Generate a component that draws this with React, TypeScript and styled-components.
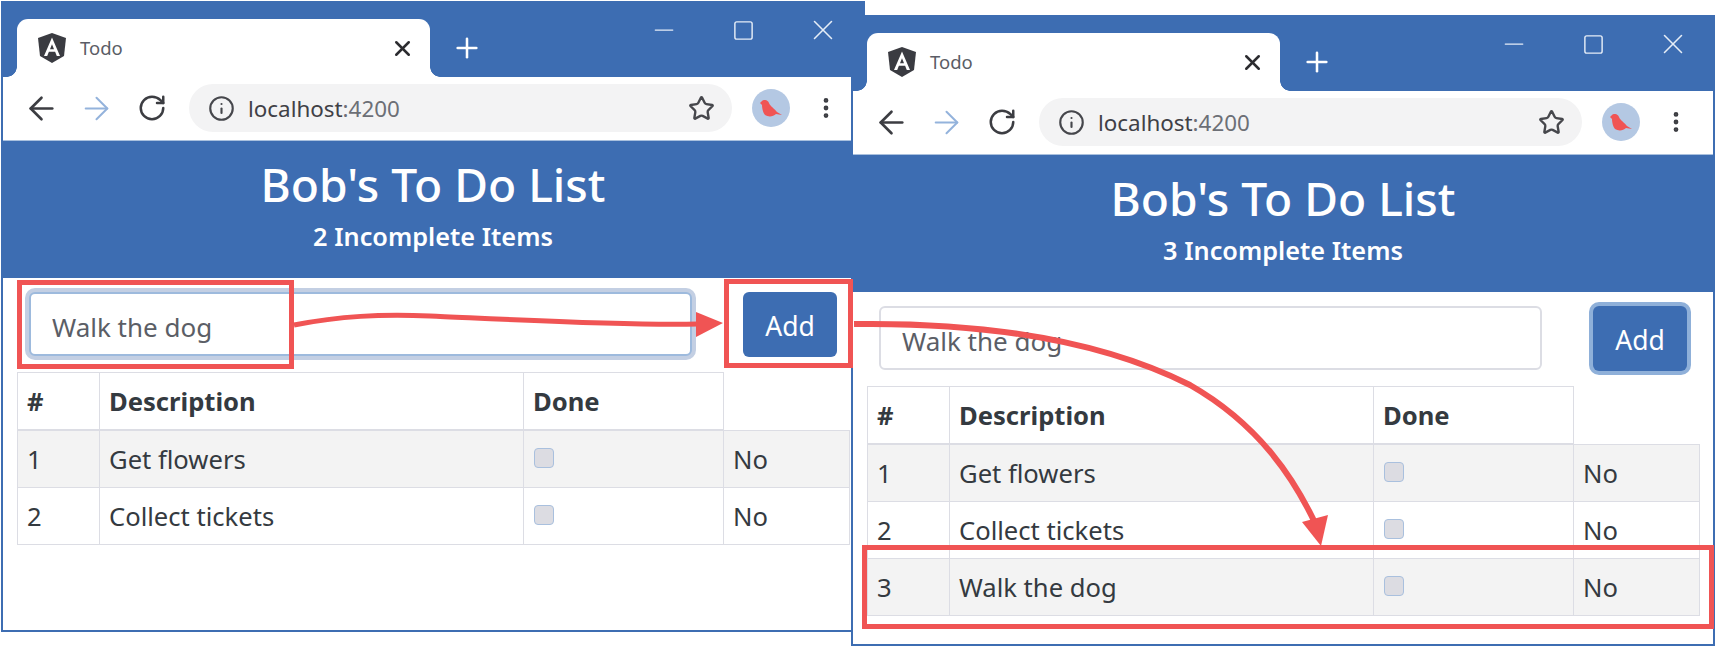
import React from 'react';
import styled, { createGlobalStyle } from 'styled-components';
import { ArrowLeft, ArrowRight, EllipsisVertical, Info, Minus, Plus, RotateCw, Square, Star, X } from 'lucide-react';

const BLUE = '#3d6db2';
const RED = '#f05454';
const LINE = '#dcdde4';

const GlobalStyle = createGlobalStyle`
  html, body {
    margin: 0;
    background: #fff;
  }
  * {
    box-sizing: border-box;
  }
`;

const Stage = styled.div`
  position: relative;
  width: 1716px;
  height: 648px;
  overflow: hidden;
  font-family: "Noto Sans", "Open Sans", sans-serif;
  color: #343a40;
`;

const BrowserWindow = styled.div<{ $x: number; $y: number }>`
  position: absolute;
  left: ${(p) => p.$x}px;
  top: ${(p) => p.$y}px;
  width: 864px;
  height: 631px;
  display: flex;
  flex-direction: column;
  background: #fff;
  border: 2px solid ${BLUE};
`;

const TabStrip = styled.div`
  display: flex;
  align-items: flex-start;
  height: 74px;
  padding: 16px 0 0 14px;
  background: ${BLUE};
`;

const Tab = styled.div`
  position: relative;
  display: flex;
  align-items: center;
  width: 413px;
  height: 58px;
  padding: 0 15px 0 21px;
  background: #fff;
  border-radius: 11px 11px 0 0;
  &::before,
  &::after {
    content: "";
    position: absolute;
    bottom: 0;
    width: 10px;
    height: 10px;
  }
  &::before {
    left: -10px;
    background: radial-gradient(circle at 0 0, transparent 9.5px, #fff 10px);
  }
  &::after {
    right: -10px;
    background: radial-gradient(circle at 100% 0, transparent 9.5px, #fff 10px);
  }
`;

const TabTitle = styled.span`
  margin-left: 14px;
  padding-bottom: 2px;
  font-size: 18.5px;
  color: #5a5d66;
`;

const TabClose = styled.span`
  display: flex;
  margin-left: auto;
  color: #2c2c30;
`;

const NewTab = styled.span`
  display: flex;
  justify-content: center;
  width: 32px;
  height: 58px;
  margin-left: 21px;
  align-items: center;
  color: #fff;
`;

const WindowControls = styled.div`
  display: flex;
  margin-left: auto;
  margin-top: 1px;
  color: #e6edf7;
`;

const ControlSlot = styled.span`
  display: flex;
  align-items: center;
  justify-content: center;
  width: 79.5px;
  height: 20px;
`;

const Toolbar = styled.div`
  display: flex;
  align-items: center;
  height: 64px;
  padding: 0 0 1px 11px;
  background: #fff;
  border-bottom: 1px solid #a9c0de;
`;

const NavSlot = styled.span<{ $muted?: boolean }>`
  display: flex;
  justify-content: center;
  width: 55px;
  color: ${(p) => (p.$muted ? '#94b3dc' : '#3c3d42')};
`;

const Omnibox = styled.div`
  display: flex;
  align-items: center;
  width: 543px;
  height: 48px;
  margin-left: 10px;
  padding: 0 17px 0 19px;
  background: #f3f3f4;
  border-radius: 24px;
  color: #46474c;
`;

const Address = styled.span`
  margin-left: 13px;
  font-size: 22.4px;
  color: #3f4046;
  & > span {
    color: #6c6f76;
  }
`;

const BookmarkStar = styled.span`
  display: flex;
  margin-left: auto;
`;

const Avatar = styled.span`
  display: flex;
  align-items: center;
  justify-content: center;
  width: 38px;
  height: 38px;
  margin-left: 20px;
  background: #b4c8e3;
  border-radius: 50%;
`;

const MenuDots = styled.span`
  display: flex;
  justify-content: center;
  width: 26px;
  margin-left: 23px;
  color: #3c3d42;
`;

const Banner = styled.header`
  display: flex;
  flex-direction: column;
  align-items: center;
  height: 137px;
  padding-top: 13px;
  background: ${BLUE};
  color: #fff;
`;

const BannerTitle = styled.h2`
  margin: 0;
  font-size: 46.2px;
  font-weight: 500;
  line-height: 61px;
`;

const BannerSub = styled.h5`
  margin: 4px 0 0;
  font-size: 25.3px;
  font-weight: 600;
  line-height: 34px;
`;

const FormRow = styled.div`
  display: flex;
  align-items: flex-start;
  height: 94px;
  padding: 14px 26px 0 26px;
`;

const TaskInput = styled.input<{ $focus?: boolean }>`
  width: 663px;
  height: 64px;
  padding: 5px 21px 0;
  font: 26px "Noto Sans", "Open Sans", sans-serif;
  color: #5b5e66;
  background: #fff;
  border: 2px solid ${(p) => (p.$focus ? '#9dbadd' : LINE)};
  border-radius: 6px;
  outline: none;
  box-shadow: ${(p) => (p.$focus ? '0 0 0 4px #c3cfe3' : 'none')};
`;

const AddButton = styled.button<{ $focus?: boolean }>`
  width: 94px;
  height: 65px;
  margin-left: 51px;
  padding: 2px 0 0;
  font: 26.5px "Noto Sans", "Open Sans", sans-serif;
  color: #fff;
  background: ${BLUE};
  border: none;
  border-radius: 6px;
  box-shadow: ${(p) => (p.$focus ? '0 0 0 4px #8fb0d9' : 'none')};
`;

const TableWrap = styled.div`
  padding-left: 14px;
`;

const Table = styled.table`
  width: 832px;
  table-layout: fixed;
  border-collapse: collapse;
  font-size: 25.6px;
  line-height: 36px;
  th, td {
    height: 57px;
    padding: 11px 9px 9px;
    text-align: left;
    vertical-align: top;
    border: 1px solid ${LINE};
  }
  th {
    font-weight: 700;
    border-bottom-width: 2px;
  }
  tbody tr:nth-child(odd) {
    background: #f3f3f3;
  }
`;

const Check = styled.input`
  appearance: none;
  display: block;
  width: 20px;
  height: 20px;
  margin: 6px 0 0 1px;
  background: #dcdce2;
  border: 1.5px solid #a9c0de;
  border-radius: 4px;
`;

const Highlight = styled.div<{ $x: number; $y: number; $w: number; $h: number }>`
  position: absolute;
  left: ${(p) => p.$x}px;
  top: ${(p) => p.$y}px;
  width: ${(p) => p.$w}px;
  height: ${(p) => p.$h}px;
  border: 5px solid ${RED};
`;

const ArrowLayer = styled.svg`
  position: absolute;
  left: 0;
  top: 0;
`;

const AngularMark = () => (
  <svg width="28" height="30" viewBox="0 0 28 30">
    <path d="M14 0 28 5 26 23 14 30 2 23 0 5Z" fill="#3a3b41" />
    <path d="M14 4.5 6 23h3.2l1.7-4.2h6.2l1.7 4.200H22L14 4.500Zm-2 11.700L14 11.200l2 5Z" fill="#fff" />
  </svg>
);

const Bird = () => (
  <svg width="22" height="17" viewBox="0 0 22 17">
    <path d="M0 3 2 1C4-1 8 0 9 3 10 6 15 9 17 12L22 15 16 14C13 17 8 17 5 15 3 13 2 8 2 5Z" fill={RED} />
  </svg>
);

interface TodoWindowProps {
  x: number;
  y: number;
  items: string[];
  incomplete: number;
  focus: 'input' | 'button';
}

const TodoWindow: React.FC<TodoWindowProps> = ({ x, y, items, incomplete, focus }) => (
  <BrowserWindow $x={x} $y={y}>
    <TabStrip>
      <Tab>
        <AngularMark />
        <TabTitle>Todo</TabTitle>
        <TabClose><X size={25} strokeWidth={2.4} /></TabClose>
      </Tab>
      <NewTab><Plus size={34} strokeWidth={1.9} /></NewTab>
      <WindowControls>
        <ControlSlot><Minus size={30} strokeWidth={1} /></ControlSlot>
        <ControlSlot><Square size={23} strokeWidth={1.5} /></ControlSlot>
        <ControlSlot><X size={34} strokeWidth={1.1} /></ControlSlot>
      </WindowControls>
    </TabStrip>
    <Toolbar>
      <NavSlot><ArrowLeft size={37} strokeWidth={1.7} /></NavSlot>
      <NavSlot $muted><ArrowRight size={37} strokeWidth={1.3} /></NavSlot>
      <NavSlot><RotateCw size={30} strokeWidth={2} /></NavSlot>
      <Omnibox>
        <Info size={27} strokeWidth={1.9} />
        <Address>localhost<span>:4200</span></Address>
        <BookmarkStar><Star size={27} strokeWidth={2.1} /></BookmarkStar>
      </Omnibox>
      <Avatar><Bird /></Avatar>
      <MenuDots><EllipsisVertical size={34} strokeWidth={2.4} /></MenuDots>
    </Toolbar>
    <Banner>
      <BannerTitle>Bob's To Do List</BannerTitle>
      <BannerSub>{incomplete} Incomplete Items</BannerSub>
    </Banner>
    <FormRow>
      <TaskInput $focus={focus === 'input'} value="Walk the dog" readOnly />
      <AddButton $focus={focus === 'button'}>Add</AddButton>
    </FormRow>
    <TableWrap>
      <Table>
        <colgroup>
          <col style={{ width: 82 }} />
          <col style={{ width: 424 }} />
          <col style={{ width: 200 }} />
          <col style={{ width: 126 }} />
        </colgroup>
        <thead>
          <tr>
            <th>#</th>
            <th>Description</th>
            <th>Done</th>
          </tr>
        </thead>
        <tbody>
          {items.map((item, i) => (
            <tr key={item}>
              <td>{i + 1}</td>
              <td>{item}</td>
              <td><Check type="checkbox" readOnly /></td>
              <td>No</td>
            </tr>
          ))}
        </tbody>
      </Table>
    </TableWrap>
  </BrowserWindow>
);

export default function App() {
  return (
    <>
      <GlobalStyle />
      <Stage>
        <TodoWindow x={1} y={1} items={['Get flowers', 'Collect tickets']} incomplete={2} focus="input" />
        <TodoWindow x={851} y={15} items={['Get flowers', 'Collect tickets', 'Walk the dog']} incomplete={3} focus="button" />
        <Highlight $x={17} $y={280} $w={277} $h={89} />
        <Highlight $x={724} $y={279} $w={129} $h={89} />
        <Highlight $x={862} $y={545} $w={852} $h={84} />
        <ArrowLayer width="1716" height="648" viewBox="0 0 1716 648">
          <path d="M294 325C340 316 380 314 430 316S620 326 698 324" fill="none" stroke={RED} strokeWidth="5" />
          <path d="M696 312 723 323 696 337Z" fill={RED} />
          <path d="M854 324C1000 322 1110 345 1190 385 1260 425 1295 480 1316 525" fill="none" stroke={RED} strokeWidth="6" />
          <path d="M1302 522 1328 515 1321 546Z" fill={RED} />
        </ArrowLayer>
      </Stage>
    </>
  );
}
